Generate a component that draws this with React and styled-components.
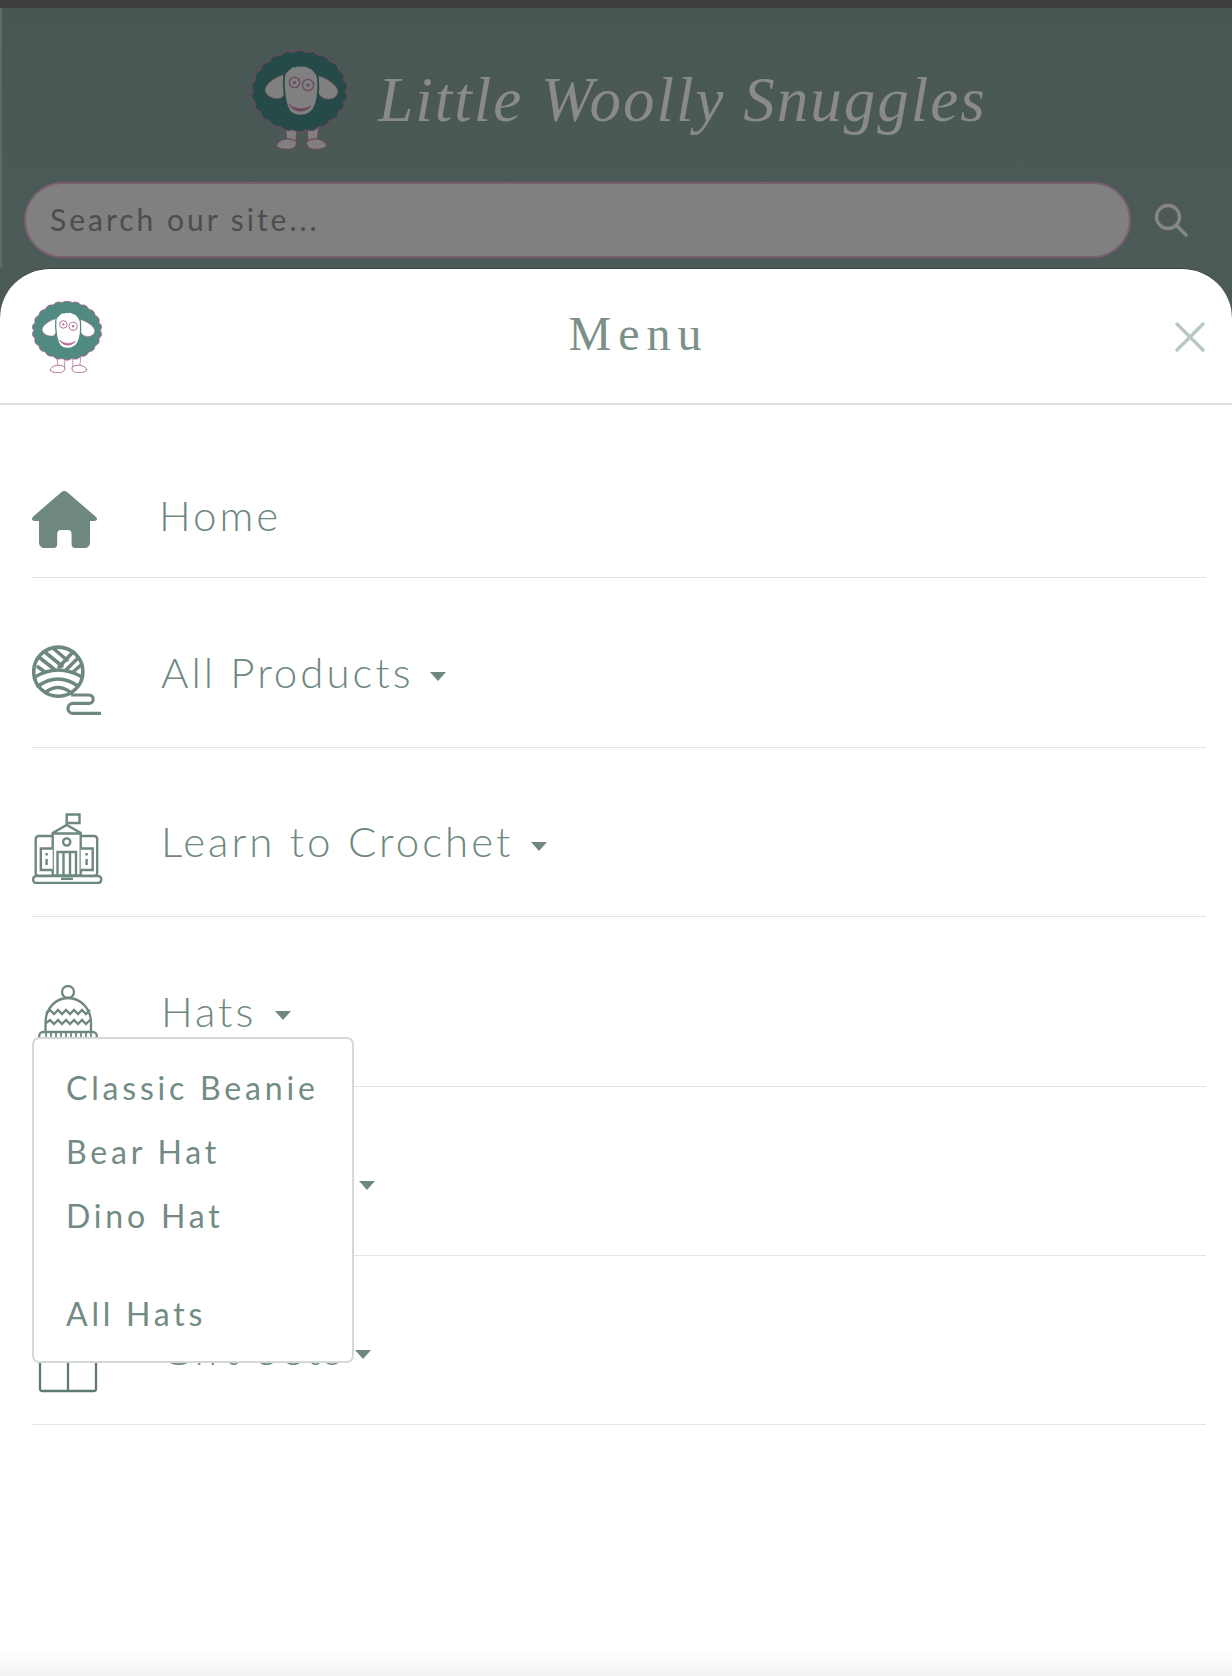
import React from 'react';
import styled, { createGlobalStyle } from 'styled-components';

const GlobalStyle = createGlobalStyle`
  html, body {
    margin: 0;
    padding: 0;
    background: #fff;
  }
  * {
    box-sizing: border-box;
  }
`;

const sans = `Lato, "Noto Sans", sans-serif`;
const green = '#6e8880';

// scalloped fleece outline for the sheep logo
const woolPath = () => {
  const pts = [];
  const steps = 200;
  for (let i = 0; i < steps; i++) {
    const a = (i / steps) * Math.PI * 2;
    const bump = 1 + 0.05 * Math.abs(Math.sin(a * 11));
    const x = 48.5 + 46 * bump * Math.cos(a);
    const y = 41 + 39 * bump * Math.sin(a);
    pts.push(`${x.toFixed(1)},${y.toFixed(1)}`);
  }
  return `M${pts.join('L')}Z`;
};

const Sheep = ({ width, wool, line, face }) => (
  <svg width={width} viewBox="0 0 97 100" fill="none">
    <path d="M34 74 H46 L45 92 H36 Z M56 74 H68 L66 92 H57 Z" fill={face} stroke={line} strokeWidth="1" />
    <path d="M25 96 C27 89 37 87 45 91 C47 96 43 99.5 36 99.5 C31 99.5 27 98 25 96 Z" fill={face} stroke={line} strokeWidth="1.3" />
    <path d="M76 96 C74 89 64 87 56 91 C54 96 58 99.5 65 99.5 C70 99.5 74 98 76 96 Z" fill={face} stroke={line} strokeWidth="1.3" />
    <path d={woolPath()} fill={wool} stroke={line} strokeWidth="1.2" />
    <path d="M35 24 C25 26 14 34 14 40 C15 47 24 50 30 48 C35 45 37 34 38 26 Z" fill={face} stroke={line} strokeWidth="0.8" />
    <path d="M64 25 C75 27 86 35 87 41 C87 48 79 51 72 48 C66 45 64 34 63 27 Z" fill={face} stroke={line} strokeWidth="0.8" />
    <path
      d="M33 26 C34 20 39 20 41 16 C45 18 47 14 50 16 C54 14 57 18 60 18 C63 21 66 23 67 28 C68 40 67 56 60 62 C54 67 44 67 39 62 C34 55 32 38 33 26 Z"
      fill={face}
      stroke={wool}
      strokeWidth="1.8"
    />
    <circle cx="43.5" cy="32.5" r="5.2" stroke={line} strokeWidth="1.3" />
    <circle cx="43.5" cy="32.5" r="1.6" fill={line} />
    <circle cx="57" cy="35" r="5.6" stroke={line} strokeWidth="1.3" />
    <circle cx="57" cy="35" r="1.6" fill={line} />
    <path d="M38 54 C43 60 54 60 60 56 C54 63 43 63 38 54 Z" fill={line} stroke={line} strokeWidth="1" />
  </svg>
);

const HomeIcon = () => (
  <svg width="66" height="60" viewBox="0 0 66 60">
    <path
      d="M29.5 2 C31 0.6 33.6 0.6 35 2 L63.5 26.5 C66.5 29.2 64.8 31 62 31 H58 V52 C58 55.5 56 58 53 58 H43.5 C41 58 39.6 56.5 39.6 54 V44 C39.6 41.5 38.4 40 36 40 H29 C26.6 40 25.2 41.5 25.2 44 V54 C25.2 56.5 23.8 58 21.5 58 H12 C9 58 7 55.5 7 52 V31 H3 C0 31 -1.2 29.2 1.2 26.5 Z"
      fill={green}
    />
  </svg>
);

const YarnIcon = () => (
  <svg width="70" height="72" viewBox="0 0 70 72" fill="none" stroke={green} strokeWidth="3.6" strokeLinecap="round">
    <circle cx="26.3" cy="26.7" r="24.6" />
    <path d="M3 32 Q26 18 50 32 M6 41 Q26 27 46 41 M14 47 Q26 38 38 47" />
    <path d="M8 13 L22 24 M14 8 L30 21 M22 4 L35 15 M6 22 L13 27" />
    <path d="M27 22 L41 7 M34 25 L46 13 M41 27 L49 20" />
    <path d="M39 50 H57 a4.2 4.2 0 0 1 0 8.4 H41 a5 5 0 0 0 0 10 H69" strokeWidth="3.2" strokeLinecap="butt" />
  </svg>
);

const SchoolIcon = () => (
  <svg width="71" height="72" viewBox="0 0 71 72" fill="none" stroke={green} strokeWidth="2.4">
    <rect x="3.7" y="24" width="61.5" height="40" rx="3" />
    <rect x="1.2" y="64" width="68" height="7" rx="3" fill="#fff" />
    <path d="M29 66.8 H41" />
    <path d="M34.7 13 V2.5 H47.5 V11 H34.7" />
    <path d="M20.7 63.5 V21 L34.7 13 L48.7 21 V63.5 Z M20.7 21.5 H48.7" fill="#fff" />
    <circle cx="34.7" cy="30" r="3.6" />
    <path d="M25.5 63.5 V40 H44 V63.5 M31.5 40 V63.5 M38 40 V63.5" />
    <path d="M20.7 36.5 H8.8 V58 H20.7 M48.7 36.5 H60.7 V58 H48.7" fill="#fff" />
    <path d="M14.6 41 V43.5 M14.6 47 V53 M54.6 41 V43.5 M54.6 47 V53" />
  </svg>
);

const HatIcon = () => {
  const ribs = [8, 13, 18, 23, 28, 33, 38, 43, 48, 53];
  const zig = (y) => {
    let d = `M8 ${y}`;
    for (let x = 8, up = true; x < 52; x += 4, up = !up) {
      d += ` L${x + 4} ${up ? y - 3 : y + 1}`;
    }
    return d;
  };
  return (
    <svg width="60" height="70" viewBox="0 0 60 70" fill="none" stroke={green} strokeWidth="2.3">
      <circle cx="30" cy="7" r="6" />
      <path d="M7.5 47 V38 C7.5 23 18 13 30 13 C42 13 53 23 53 38 V47" />
      <path d={zig(28)} />
      <path d={zig(38)} />
      <rect x="1.2" y="47" width="57.6" height="20" rx="4" />
      {ribs.map((x) => (
        <path key={x} d={`M${x} 47 V67`} strokeWidth="1.8" />
      ))}
    </svg>
  );
};

const GiftIcon = () => (
  <svg width="62" height="70" viewBox="0 0 62 70" fill="none" stroke="#5f7a75" strokeWidth="2.3">
    <path d="M31 10 C24 0 14 2 17 8 C19 11 26 11 31 10 C36 11 43 11 45 8 C48 2 38 0 31 10 Z" />
    <rect x="1" y="10" width="60" height="12" rx="2" />
    <rect x="3" y="22" width="56" height="45" rx="2" />
    <path d="M31 10 V67" />
  </svg>
);

const rows = [
  { label: 'Home', Icon: HomeIcon, height: 173, top: 51, nudge: 6, slot: 127 },
  { label: 'All Products', Icon: YarnIcon, height: 170, top: 22, nudge: 14, caret: 16 },
  { label: 'Learn to Crochet', Icon: SchoolIcon, height: 169, top: 22, nudge: 10, caret: 18 },
  { label: 'Hats', Icon: HatIcon, height: 170, top: 22, nudge: 14, indent: 6, caret: 19 },
  { label: '', height: 169, top: 22, caret: 16, blankWidth: 182 },
  { label: 'Gift Sets', Icon: GiftIcon, height: 169, top: 22, nudge: 16, indent: 5, caret: 11 },
];

const dropdownItems = ['Classic Beanie', 'Bear Hat', 'Dino Hat'];

const App = () => {
  return (
    <Page>
      <GlobalStyle />
      <TopStrip />
      <SiteHeader>
        <Brand>
          <Sheep width={97} wool="#264a48" line="#6a4a5c" face="#808080" />
          <BrandName>Little Woolly Snuggles</BrandName>
        </Brand>
        <SearchRow>
          <SearchBox>Search our site...</SearchBox>
          <SearchButton>
            <svg width="34" height="34" viewBox="0 0 34 34" fill="none" stroke="#868686" strokeWidth="3.4">
              <circle cx="14" cy="14" r="11.5" />
              <path d="M22.5 22.5 L32 32" strokeLinecap="round" />
            </svg>
          </SearchButton>
        </SearchRow>
      </SiteHeader>
      <Sheet>
        <SheetHeader>
          <Sheep width={70} wool="#508a80" line="#b0668e" face="#fff" />
          <SheetTitle>Menu</SheetTitle>
          <CloseButton>
            <svg width="30" height="30" viewBox="0 0 30 30" stroke="#b8c8c4" strokeWidth="3.4" strokeLinecap="round">
              <path d="M2 2 L28 28 M28 2 L2 28" />
            </svg>
          </CloseButton>
        </SheetHeader>
        <MenuList>
          {rows.map(({ label, Icon, height, top, nudge, slot, indent, caret, blankWidth }, i) => (
            <MenuRow key={i} $height={height} $top={top}>
              <IconSlot $nudge={nudge} $width={slot} $indent={indent}>
                {Icon && <Icon />}
              </IconSlot>
              <Label $blank={blankWidth}>{label}</Label>
              {caret && <Caret $gap={caret} />}
            </MenuRow>
          ))}
          <Dropdown>
            {dropdownItems.map((item) => (
              <DropdownItem key={item}>{item}</DropdownItem>
            ))}
            <DropdownItem $spaced>All Hats</DropdownItem>
          </Dropdown>
        </MenuList>
        <BottomFade />
      </Sheet>
    </Page>
  );
};

export default App;

const Page = styled.div`
  width: 1232px;
  height: 1676px;
  overflow: hidden;
  background: #4b5a57;
  font-family: ${sans};
`;

const TopStrip = styled.div`
  height: 8px;
  background: #3f3f3f;
`;

const SiteHeader = styled.header`
  height: 260px;
  padding: 42px 44px 0 24px;
  background: linear-gradient(#485654, #4c5b58);
  border-left: 2px solid #5e6a68;
`;

const Brand = styled.div`
  display: flex;
  align-items: center;
  justify-content: center;
  gap: 30px;
  height: 100px;
  padding-left: 24px;
`;

const BrandName = styled.div`
  font-family: "Liberation Serif", serif;
  font-style: italic;
  font-size: 63px;
  letter-spacing: 2px;
  color: #8a8a8a;
  white-space: nowrap;
`;

const SearchRow = styled.div`
  display: flex;
  align-items: center;
  margin-top: 32px;
  margin-left: -2px;
  gap: 23px;
`;

const SearchBox = styled.div`
  flex: 1;
  height: 76px;
  padding: 0 0 2px 24px;
  display: flex;
  align-items: center;
  border: 2px solid #7b5f70;
  border-radius: 38px;
  background: #808080;
  color: #4d4d4d;
  font-size: 30px;
  letter-spacing: 3px;
`;

const SearchButton = styled.div`
  display: flex;
`;

const Sheet = styled.section`
  position: relative;
  height: 1408px;
  background: #fff;
  border-top: 1px solid #38413f;
  border-radius: 50px 50px 0 0;
`;

const SheetHeader = styled.div`
  position: relative;
  height: 136px;
  padding: 32px 27px 0 32px;
  display: flex;
  justify-content: space-between;
  align-items: flex-start;
  border-bottom: 2px solid #dbe0de;
`;

const SheetTitle = styled.h1`
  position: absolute;
  left: 0;
  right: 0;
  top: 37px;
  margin: 0;
  padding-left: 45px;
  text-align: center;
  font-family: "Liberation Serif", serif;
  font-weight: 400;
  font-size: 48px;
  letter-spacing: 7px;
  color: #7a9088;
`;

const CloseButton = styled.div`
  display: flex;
  margin-top: 21px;
`;

const MenuList = styled.nav`
  position: relative;
  padding: 0 26px 0 32px;
`;

const MenuRow = styled.div`
  display: flex;
  align-items: center;
  height: ${(p) => p.$height}px;
  padding-top: ${(p) => p.$top}px;
  border-bottom: 1px solid #dfe5e3;
`;

const IconSlot = styled.div`
  flex: none;
  display: flex;
  width: ${(p) => p.$width || 129}px;
  margin-top: ${(p) => p.$nudge || 0}px;
  padding-left: ${(p) => p.$indent || 0}px;
`;

const Label = styled.span`
  min-width: ${(p) => p.$blank || 0}px;
  margin-bottom: 4px;
  font-size: 42px;
  font-weight: 300;
  letter-spacing: 3px;
  color: ${green};
  white-space: nowrap;
`;

const Caret = styled.span`
  margin-left: ${(p) => p.$gap}px;
  margin-top: 6px;
  border-left: 8px solid transparent;
  border-right: 8px solid transparent;
  border-top: 9px solid ${green};
`;

const Dropdown = styled.div`
  position: absolute;
  left: 32px;
  top: 632px;
  width: 322px;
  height: 326px;
  padding: 29px 0 0 32px;
  background: #fff;
  border: 2px solid #d6d8d7;
  border-radius: 7px;
`;

const DropdownItem = styled.div`
  height: 64px;
  margin-top: ${(p) => (p.$spaced ? 34 : 0)}px;
  font-size: 32px;
  letter-spacing: 3.8px;
  line-height: 40px;
  color: #728b84;
  white-space: nowrap;
`;

const BottomFade = styled.div`
  position: absolute;
  left: 0;
  right: 0;
  bottom: 0;
  height: 26px;
  background: linear-gradient(#fff, #f3f3f3);
`;
